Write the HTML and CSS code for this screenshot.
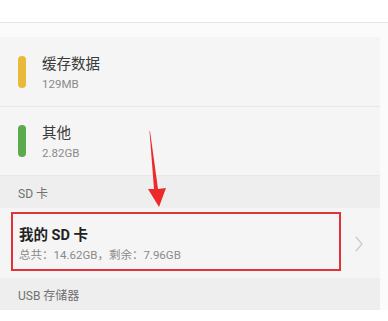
FILE: index.html
```html
<!DOCTYPE html>
<html lang="zh">
<head>
<meta charset="utf-8">
<link rel="stylesheet" href="styles.css">
</head>
<body>
<div class="topbar"></div>
<div class="page">
  <div class="card">
    <div class="row">
      <span class="bar bar-yellow"></span>
      <div class="text">
        <div class="title">缓存数据</div>
        <div class="sub">129MB</div>
      </div>
    </div>
    <div class="row row-last">
      <span class="bar bar-green"></span>
      <div class="text">
        <div class="title">其他</div>
        <div class="sub">2.82GB</div>
      </div>
    </div>
    <div class="header">SD 卡</div>
    <div class="item">
      <div class="text">
        <div class="title bold">我的 SD 卡</div>
        <div class="sub">总共：14.62GB，剩余：7.96GB</div>
      </div>
      <svg class="chev" width="10" height="18" viewBox="0 0 10 18"><polyline points="2,2 8,9 2,16" fill="none" stroke="#c8c8c8" stroke-width="1.2"/></svg>
      <div class="mark"></div>
    </div>
    <div class="header">USB 存储器</div>
  </div>
  <svg class="arrow" width="30" height="90" viewBox="0 0 30 90"><polygon points="14,0 13.5,0 18,58 12,58 23,76 30,57 22,58" fill="#ec2a2a"/></svg>
</div>
</body>
</html>
```
FILE: styles.css
```css
html, body {
  margin: 0;
  padding: 0;
}
body {
  background: #ffffff;
  font-family: Roboto, "Noto Sans CJK SC", "Noto Sans", sans-serif;
  width: 388px;
  height: 321px;
  overflow: hidden;
}
.topbar {
  height: 22px;
  background: #ffffff;
  box-shadow: 0 1px 2px rgba(0,0,0,0.12);
  border-bottom: 1px solid #e4e4e4;
  position: relative;
}
.page {
  position: relative;
  background: #fbfbfb;
  padding-top: 14px;
}
.card {
  width: 380px;
  background: #f5f5f5;
}
.row {
  height: 70px;
  display: flex;
  align-items: center;
  padding-left: 18px;
  border-bottom: 1px solid #e8e8e8;
  box-sizing: border-box;
}
.row-last {
  height: 69px;
}
.bar {
  width: 8px;
  height: 32px;
  border-radius: 4px;
  margin-right: 16px;
}
.bar-yellow { background: #e9b93c; }
.bar-green { background: #5bab4c; }
.text {
  display: flex;
  flex-direction: column;
  padding-top: 4px;
}
.title {
  font-size: 14.5px;
  line-height: 20px;
  color: #3a3a3a;
}
.bold {
  font-weight: bold;
  color: #222;
}
.sub {
  font-size: 11.5px;
  line-height: 18px;
  color: #8a8a8a;
}
.header {
  height: 32px;
  background: #eeeeee;
  display: flex;
  align-items: center;
  padding-left: 18px;
  font-size: 12px;
  color: #707070;
}
.item {
  position: relative;
  height: 70px;
  display: flex;
  align-items: center;
  justify-content: space-between;
  padding-left: 19px;
  padding-right: 16px;
  background: #f5f5f5;
}
.mark {
  position: absolute;
  left: 11px;
  top: 4px;
  width: 330px;
  height: 59px;
  border: 2px solid #e0343a;
  box-sizing: border-box;
}
.chev {
  margin-top: 2px;
}
.arrow {
  position: absolute;
  left: 136px;
  top: 108px;
}
```
